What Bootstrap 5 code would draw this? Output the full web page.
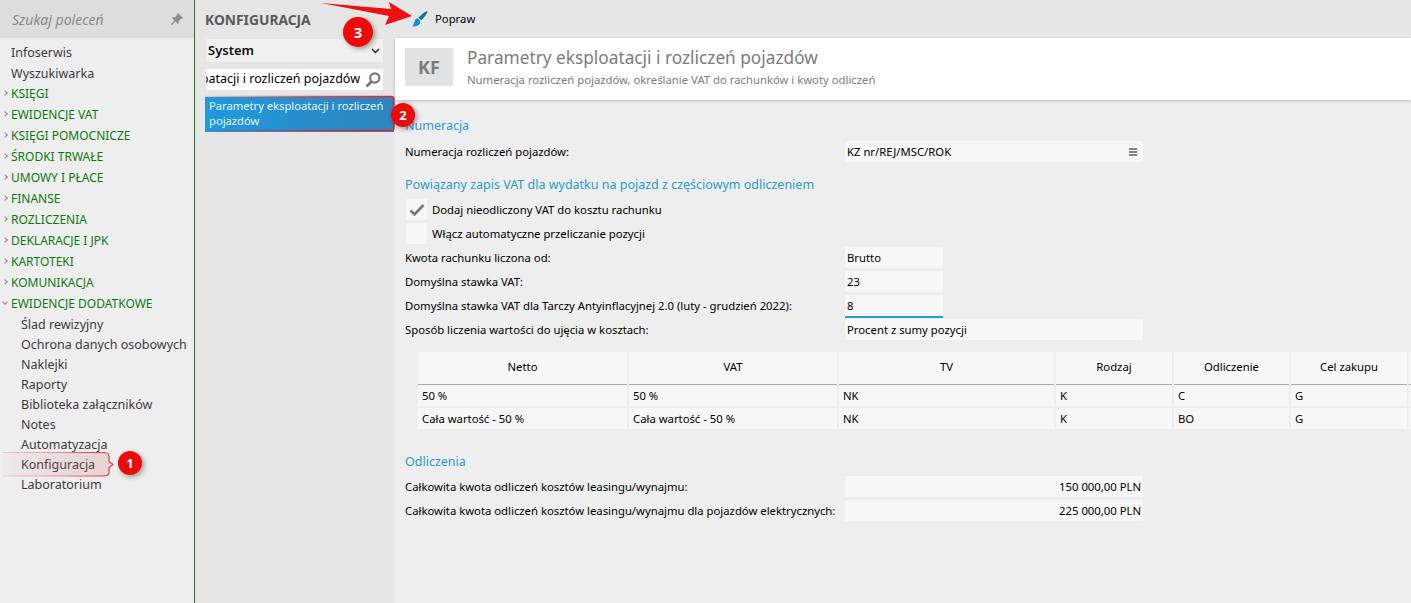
<!DOCTYPE html>
<html lang="pl"><head><meta charset="utf-8"><title>Konfiguracja</title>
<link href="https://cdn.jsdelivr.net/npm/bootstrap@5.3.0/dist/css/bootstrap.min.css" rel="stylesheet">
<style>
html,body{height:100%;}
body{background:#eee;font-family:"Noto Sans","Open Sans",sans-serif;font-size:11.3px;color:#000;overflow:hidden;position:relative;}
.shell{width:1411px;height:603px;}
.side{width:195px;border-right:1px solid #17801a;background:#eee;flex:none;}
.side-search{height:38px;background:#ddd;color:#8a8a8a;font-style:italic;font-size:14px;padding:0 11px 0 12px;}
.side-list{padding-top:4px;}
.s-item{height:21px;line-height:21px;padding-left:11px;color:#3d3a3d;font-size:12.5px;position:relative;}
.s-group{color:#0d7a10;font-size:12px;}
.s-first{margin-top:-1px;}
.s-open{margin-bottom:1px;}
.s-group::before{content:"";position:absolute;left:3px;top:8px;width:4px;height:4px;border-top:1px solid #888;border-right:1px solid #888;transform:rotate(45deg);}
.s-open::before{transform:rotate(135deg);left:3px;top:7px;}
.s-sub{height:20px;line-height:20px;padding-left:21px;}
.mid{width:200px;flex:none;background:#e6e6e6;padding:0 10px;}
.mid-title{height:38px;line-height:39px;font-weight:700;font-size:13.8px;color:#5a5a5a;}
.mid-sel{height:23px;margin-top:1px;background:#f0f0f0;width:177px;color:#111;font-weight:600;font-size:13px;padding:0 3px 0 2px;margin-left:1px;}
.mid-search{height:21px;margin-top:7px;background:#fff;width:177px;margin-left:1px;font-size:12.5px;overflow:hidden;}
.mid-search span{white-space:nowrap;}
.mid-lens{flex:none;margin:0 2px 0 5px;}
.mid-active{background:linear-gradient(90deg,#1e9ade,#2f85bb);color:#e8f4fb;width:189px;height:35px;margin-top:7px;font-size:11.2px;line-height:15px;padding:1px 4px;}
.top{height:38px;background:#e6e6e6;}
.top-action{padding-left:17px;gap:7px;}
.head{height:62px;background:#fff;box-shadow:0 1px 3px rgba(0,0,0,.22);padding:10px 10px;}
.kf{width:48px;height:38px;background:#e2e2e2;color:#7b7b7b;font-weight:700;font-size:18px;}
.head-gap{gap:14px;}
.head-title{font-size:17.25px;color:#7c7c7c;line-height:22px;margin-top:-1px;}
.head-sub{font-size:11.3px;color:#7c7c7c;line-height:16px;margin-top:3px;}
.form-area{padding:0 0 0 10px;flex:1;overflow:hidden;}
.sect{color:#2a9bcb;font-size:12.5px;line-height:18px;height:18px;}
.f-row{height:21px;line-height:21px;margin-bottom:3px;}
.f-label{width:440px;flex:none;white-space:nowrap;}
.fld{background:#f7f7f7;height:21px;line-height:21px;padding:0 2px;}
.w-l{width:298px;}.w-s{width:98px;}
.cb{width:21px;height:21px;background:#f7f7f7;margin-left:1px;margin-right:5px;}
.fld-on{box-shadow:0 2px 0 #1b9fe0;}
.grid-wrap{margin:12px 0 0 13px;width:1000px;overflow:hidden;}
.dt{border-collapse:collapse;table-layout:fixed;width:1050px;}
.dt th{background:#f7f7f7;height:32px;font-weight:400;text-align:center;border-bottom:1px solid #aaa;border-right:2px solid #eee;}
.dt td{background:#f7f7f7;height:21px;padding:0 4px;line-height:21px;border-right:2px solid #eee;}
.dt .r1 td{border-top:1px solid #eee;height:22px;}
.dt .r2 td{border-top:2px solid #eee;height:22px;}
.over{position:absolute;left:0;top:0;pointer-events:none;}
.nr{position:absolute;width:24px;height:24px;border-radius:50%;background:#ee0a0a;color:#fff;font-weight:700;font-size:13px;line-height:24px;text-align:center;box-shadow:2px 2px 5px rgba(0,0,0,.35);}
.n1{left:118px;top:451px;}.n2{left:391px;top:103px;}.n3{left:343px;top:17px;width:30px;height:30px;line-height:30px;font-size:15px;}
</style></head><body>
<div class="shell d-flex">
<aside class="side d-flex flex-column">
 <div class="side-search d-flex align-items-center justify-content-between"><span>Szukaj poleceń</span>
 <svg width="12" height="12" viewBox="0 0 12 12"><path d="M7 0l5 5-1 1-1-.4-2.300 2.300.3 2.100-1 1-2.500-2.500L1 12l-1 0 0-1 3.500-3.500L1 5l1-1 2.100.3L6.400 2 6 1z" fill="#8d8d8d"/></svg></div>
 <nav class="side-list">
  <div class="s-item">Infoserwis</div><div class="s-item">Wyszukiwarka</div>
  <div class="s-item s-group s-first">KSIĘGI</div><div class="s-item s-group">EWIDENCJE VAT</div><div class="s-item s-group">KSIĘGI POMOCNICZE</div><div class="s-item s-group">ŚRODKI TRWAŁE</div><div class="s-item s-group">UMOWY I PŁACE</div><div class="s-item s-group">FINANSE</div><div class="s-item s-group">ROZLICZENIA</div><div class="s-item s-group">DEKLARACJE I JPK</div><div class="s-item s-group">KARTOTEKI</div><div class="s-item s-group">KOMUNIKACJA</div><div class="s-item s-group s-open">EWIDENCJE DODATKOWE</div>
  <div class="s-item s-sub">Ślad rewizyjny</div><div class="s-item s-sub">Ochrona danych osobowych</div><div class="s-item s-sub">Naklejki</div><div class="s-item s-sub">Raporty</div><div class="s-item s-sub">Biblioteka załączników</div><div class="s-item s-sub">Notes</div><div class="s-item s-sub">Automatyzacja</div><div class="s-item s-sub">Konfiguracja</div><div class="s-item s-sub">Laboratorium</div>
 </nav>
</aside>
<section class="mid">
 <div class="mid-title">KONFIGURACJA</div>
 <div class="mid-sel d-flex align-items-center justify-content-between"><span>System</span><svg width="9" height="6" viewBox="0 0 9 6"><path d="M1 1l3.500 3.500L8 1" fill="none" stroke="#222" stroke-width="1.400"/></svg></div>
 <div class="mid-search d-flex align-items-center justify-content-end"><span>Parametry eksploatacji i rozliczeń pojazdów</span><svg class="mid-lens" width="16" height="16" viewBox="0 0 16 16"><circle cx="9.800" cy="6" r="4.600" fill="none" stroke="#777" stroke-width="2.200"/><path d="M6.500 9.500L1.500 14.500" stroke="#777" stroke-width="2.800"/></svg></div>
 <div class="mid-active">Parametry eksploatacji i rozliczeń pojazdów</div>
</section>
<main class="flex-grow-1 d-flex flex-column" style="min-width:0">
 <div class="top d-flex align-items-center top-action"><svg width="16" height="16" viewBox="0 0 16 16"><path d="M15.300.3c.6.600-1.700 5.200-6 8.900L6.300 6.700C10.200 2.600 14.600-.3 15.300.3z" fill="#17709f"/><path d="M5.800 7.300C3.800 7.700 2.800 9 2.500 10.800c-.2 1.400-1 2.600-2 4.700 2.800.4 6.300-.4 7.400-2.900.5-1.200.4-2.300 0-3z" fill="#0f8fd4"/></svg><span>Popraw</span></div>
 <div class="flex-grow-1 d-flex flex-column" style="min-height:0">
  <div class="head d-flex head-gap"><div class="kf d-flex align-items-center justify-content-center flex-none">KF</div><div><div class="head-title">Parametry eksploatacji i rozliczeń pojazdów</div><div class="head-sub">Numeracja rozliczeń pojazdów, określanie VAT do rachunków i kwoty odliczeń</div></div></div>
  <div class="form-area">
   <div class="sect" style="margin-top:17px;margin-bottom:6px">Numeracja</div>
   <div class="f-row d-flex"><div class="f-label">Numeracja rozliczeń pojazdów:</div><div class="fld w-l d-flex justify-content-between align-items-center"><span>KZ nr/REJ/MSC/ROK</span><svg class="me-1" width="8" height="8" viewBox="0 0 8 8"><path d="M0 1h8M0 4h8M0 7h8" stroke="#111" stroke-width="1"/></svg></div></div>
   <div class="sect" style="margin-top:14px;margin-bottom:5px">Powiązany zapis VAT dla wydatku na pojazd z częściowym odliczeniem</div>
   <div class="f-row d-flex"><div class="cb d-flex align-items-center justify-content-center"><svg width="16" height="14" viewBox="0 0 16 14"><path d="M1.500 7.500l4 4L14.500 2" fill="none" stroke="#777" stroke-width="2.600"/></svg></div><div>Dodaj nieodliczony VAT do kosztu rachunku</div></div>
   <div class="f-row d-flex"><div class="cb"></div><div>Włącz automatyczne przeliczanie pozycji</div></div>
   <div class="f-row d-flex"><div class="f-label">Kwota rachunku liczona od:</div><div class="fld w-s">Brutto</div></div>
   <div class="f-row d-flex"><div class="f-label">Domyślna stawka VAT:</div><div class="fld w-s">23</div></div>
   <div class="f-row d-flex"><div class="f-label">Domyślna stawka VAT dla Tarczy Antyinflacyjnej 2.0 (luty - grudzień 2022):</div><div class="fld w-s fld-on">8</div></div>
   <div class="f-row d-flex"><div class="f-label">Sposób liczenia wartości do ujęcia w kosztach:</div><div class="fld w-l">Procent z sumy pozycji</div></div>
   <div class="grid-wrap">
    <table class="dt"><colgroup><col style="width:210px"><col style="width:210px"><col style="width:217px"><col style="width:118px"><col style="width:117px"><col style="width:118px"><col></colgroup>
    <thead><tr><th>Netto</th><th>VAT</th><th>TV</th><th>Rodzaj</th><th>Odliczenie</th><th>Cel zakupu</th><th></th></tr></thead>
    <tbody><tr class="r1"><td>50 %</td><td>50 %</td><td>NK</td><td>K</td><td>C</td><td>G</td><td></td></tr>
    <tr class="r2"><td>Cała wartość - 50 %</td><td>Cała wartość - 50 %</td><td>NK</td><td>K</td><td>BO</td><td>G</td><td></td></tr></tbody></table>
   </div>
   <div class="sect" style="margin-top:24px;margin-bottom:5px">Odliczenia</div>
   <div class="f-row d-flex"><div class="f-label">Całkowita kwota odliczeń kosztów leasingu/wynajmu:</div><div class="fld w-l text-end">150 000,00 PLN</div></div>
   <div class="f-row d-flex"><div class="f-label">Całkowita kwota odliczeń kosztów leasingu/wynajmu dla pojazdów elektrycznych:</div><div class="fld w-l text-end">225 000,00 PLN</div></div>
  </div>
 </div>
</main>
</div>
<svg class="over" width="1411" height="603" viewBox="0 0 1411 603">
 <defs><linearGradient id="pk" x1="0" x2="1"><stop offset="0" stop-color="#c66" stop-opacity=".03"/><stop offset=".5" stop-color="#c66" stop-opacity=".13"/><stop offset="1" stop-color="#c66" stop-opacity=".2"/></linearGradient>
 <linearGradient id="ln" x1="0" x2="1"><stop offset="0" stop-color="#f23a3a" stop-opacity=".2"/><stop offset=".5" stop-color="#f23a3a" stop-opacity=".5"/><stop offset=".85" stop-color="#f23a3a"/></linearGradient>
 <linearGradient id="ln2" x1="0" x2="1"><stop offset="0" stop-color="#e8202c" stop-opacity=".15"/><stop offset=".6" stop-color="#e8202c" stop-opacity=".8"/><stop offset="1" stop-color="#e8202c"/></linearGradient></defs>
 <path d="M3 452.500H103q6 0 6 4v5l4 3-4 3v5q0 3.500-6 3.500H3z" fill="url(#pk)"/>
 <path d="M3 452.500H103q6 0 6 4v5l4 3-4 3v5q0 3.500-6 3.500H3" fill="none" stroke="url(#ln)" stroke-width="1.200"/>
 <path d="M205 96.500H391q3 0 3 3v28q0 3-3 3H205" fill="none" stroke="url(#ln2)" stroke-width="1.500"/>
 <path d="M321 3L391 9 389 2 412 16 385 25 389 16z" fill="#f01010"/>
</svg>
<div class="nr n1">1</div><div class="nr n2">2</div><div class="nr n3">3</div>
<script src="https://cdn.jsdelivr.net/npm/bootstrap@5.3.0/dist/js/bootstrap.bundle.min.js"></script>
</body></html>
